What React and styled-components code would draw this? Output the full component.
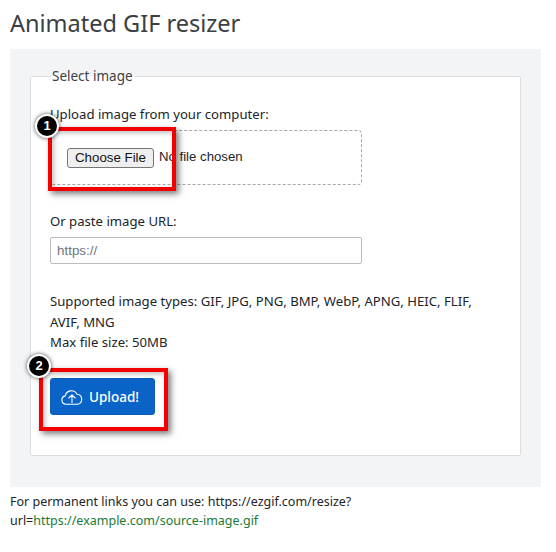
import React from 'react';
import styled, { createGlobalStyle } from 'styled-components';

const GlobalStyle = createGlobalStyle`
  html, body {
    margin: 0;
    padding: 0;
    background: #fff;
  }
  body {
    font-family: "Noto Sans", "Open Sans", sans-serif;
    font-size: 13.15px;
    line-height: 20.5px;
    color: #212529;
  }
`;

const Page = styled.div`
  position: relative;
  width: 556px;
  height: 552px;
  overflow: hidden;
  padding: 0 15px 0 10px;
  box-sizing: border-box;
`;

const Title = styled.h1`
  margin: 0;
  padding-top: 6px;
  height: 49px;
  box-sizing: border-box;
  font-size: 23.5px;
  line-height: 34px;
  font-weight: 400;
  color: #3c4043;
`;

const Panel = styled.div`
  background: #f3f4f6;
  padding: 17px 20px 31px;
  height: 438px;
  box-sizing: border-box;
  border-radius: 2px;
`;

const Fieldset = styled.fieldset`
  margin: 0;
  padding: 19px 19px 0;
  height: 390px;
  box-sizing: border-box;
  background: #fff;
  border: 1px solid #dcdee0;
  border-radius: 2px;
`;

const Legend = styled.legend`
  margin-left: 1px;
  padding: 0 1px;
  font-size: 13.5px;
  line-height: 20px;
  color: #3c4043;
`;

const Label = styled.div`
  line-height: 19px;
  margin-bottom: 6px;
`;

const DropZone = styled.div`
  display: flex;
  align-items: center;
  width: 312px;
  height: 55px;
  box-sizing: border-box;
  padding-left: 16px;
  border: 1px dashed #a8a8a8;
  border-radius: 4px;
  margin-bottom: 27px;
`;

const FileButton = styled.button`
  width: 87px;
  height: 20px;
  padding: 0;
  margin-right: 5px;
  font-family: "Liberation Sans", Arial, sans-serif;
  font-size: 13.3px;
  color: #111;
  background: #efefef;
  border: 1px solid #767676;
  border-radius: 3px;
`;

const FileText = styled.span`
  font-family: "Liberation Sans", Arial, sans-serif;
  font-size: 13.2px;
`;

const UrlInput = styled.input`
  display: block;
  width: 312px;
  height: 27px;
  box-sizing: border-box;
  padding: 0 6px;
  margin: 2px 0 27px;
  font-family: "Liberation Sans", Arial, sans-serif;
  font-size: 13.4px;
  border: 1px solid #b9bbbd;
  border-radius: 2px;
  &::placeholder {
    color: #6c757d;
  }
`;

const Info = styled.div`
  width: 440px;
  margin-bottom: 25px;
`;

const UploadButton = styled.button`
  display: flex;
  align-items: center;
  gap: 6px;
  width: 105px;
  height: 37px;
  padding: 1px 0 0 10px;
  box-sizing: border-box;
  font-family: inherit;
  font-size: 13.5px;
  font-weight: 500;
  color: #fff;
  background: #0a64c8;
  border: 1px solid #0a5cb8;
  border-radius: 3px;
`;

const RedBox = styled.div`
  position: absolute;
  left: ${p => p.$left}px;
  top: ${p => p.$top}px;
  width: ${p => p.$width}px;
  height: ${p => p.$height}px;
  box-sizing: border-box;
  border: 4px solid #f30000;
  box-shadow: 3px 3px 6px rgba(0, 0, 0, 0.5), inset 2px 2px 5px rgba(0, 0, 0, 0.25);
  pointer-events: none;
`;

const Badge = styled.div`
  position: absolute;
  left: ${p => p.$left}px;
  top: ${p => p.$top}px;
  width: 24px;
  height: 24px;
  box-sizing: border-box;
  display: flex;
  align-items: center;
  justify-content: center;
  border-radius: 50%;
  background: #000;
  border: 2px solid #fff;
  box-shadow: 0 0 4px rgba(0, 0, 0, 0.7);
  color: #fff;
  font-family: "Liberation Sans", Arial, sans-serif;
  font-size: 13px;
  font-weight: 700;
`;

const Footer = styled.p`
  margin: 5px 0 0;
  width: 400px;
  font-size: 12.5px;
  line-height: 19px;
  color: #212529;
`;

const GreenLink = styled.span`
  color: #1a7a36;
`;

const CloudIcon = () => (
  <svg width="22" height="16" viewBox="0 0 22 16" fill="none" stroke="#fff" strokeWidth="1.1" strokeLinecap="round" strokeLinejoin="round">
    <path d="M5.2 15.2H5A4.2 4.2 0 0 1 4.2 6.9 6.3 6.3 0 0 1 16 5.3 5 5 0 0 1 16.6 15.2H5.2z" />
    <path d="M11 13.6V5.8M7.8 9l3.2-3.2L14.2 9" />
  </svg>
);

export default function App() {
  return (
    <>
      <GlobalStyle />
      <Page>
        <Title>Animated GIF resizer</Title>
        <Panel>
          <Fieldset>
            <Legend>Select image</Legend>
            <Label>Upload image from your computer:</Label>
            <DropZone>
              <FileButton type="button">Choose File</FileButton>
              <FileText>No file chosen</FileText>
            </DropZone>
            <Label>Or paste image URL:</Label>
            <UrlInput placeholder="https://" />
            <Info>
              Supported image types: GIF, JPG, PNG, BMP, WebP, APNG, HEIC, FLIF, AVIF, MNG
              <br />
              Max file size: 50MB
            </Info>
            <UploadButton type="button">
              <CloudIcon />
              Upload!
            </UploadButton>
          </Fieldset>
        </Panel>
        <Footer>
          For permanent links you can use: https://ezgif.com/resize?
          <br />
          url=<GreenLink>https://example.com/source-image.gif</GreenLink>
        </Footer>
        <RedBox $left={48} $top={127} $width={128} $height={64} />
        <RedBox $left={39} $top={368} $width={129} $height={63} />
        <Badge $left={35} $top={114}>1</Badge>
        <Badge $left={27} $top={354}>2</Badge>
      </Page>
    </>
  );
}
